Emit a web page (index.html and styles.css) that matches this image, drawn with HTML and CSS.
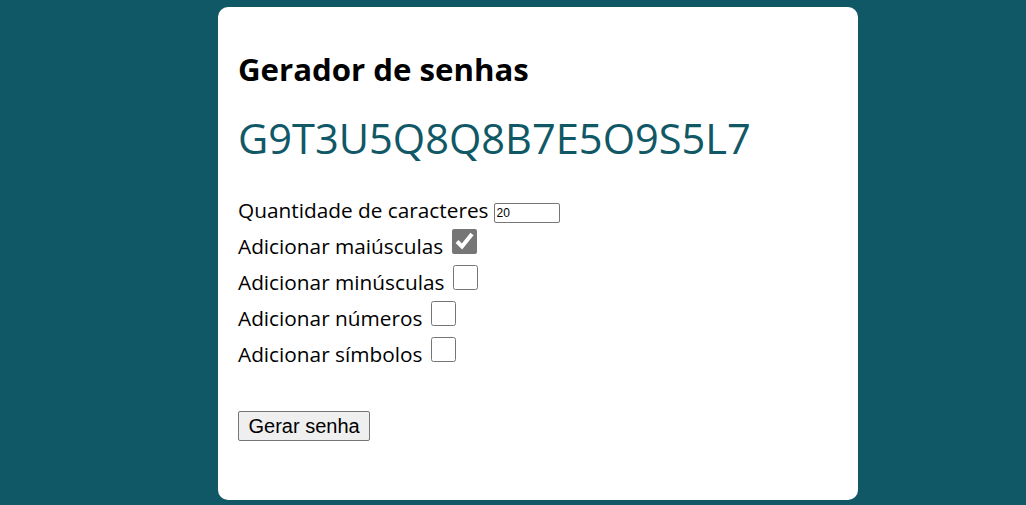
FILE: index.html
```html
<!DOCTYPE html>
<html lang="pt-BR">
<head>
<meta charset="utf-8">
<title>Gerador de senhas</title>
<link rel="stylesheet" href="styles.css">
</head>
<body>
<main class="page">
  <section class="card">
    <h1 class="title">Gerador de senhas</h1>
    <p class="password">G9T3U5Q8Q8B7E5O9S5L7</p>
    <form class="options">
      <label class="row">Quantidade de caracteres <input class="qty" type="number" value="20"></label>
      <label class="row">Adicionar maiúsculas <input class="check" type="checkbox" checked></label>
      <label class="row">Adicionar minúsculas <input class="check" type="checkbox"></label>
      <label class="row">Adicionar números <input class="check" type="checkbox"></label>
      <label class="row">Adicionar símbolos <input class="check" type="checkbox"></label>
      <div class="actions"><button class="btn" type="button">Gerar senha</button></div>
    </form>
  </section>
</main>
</body>
</html>
```
FILE: styles.css
```css
html, body {
  margin: 0;
  padding: 0;
}
body {
  background: #115866;
  font-family: "Open Sans", "Noto Sans", sans-serif;
  color: #000;
}
.page {
  display: flex;
  justify-content: center;
  padding: 7px 0 0 50px;
}
.card {
  box-sizing: border-box;
  width: 640px;
  height: 493px;
  padding: 20px;
  background: #fff;
  border-radius: 10px;
}
.title {
  margin: 22px 0 0;
  font-size: 31.2px;
  font-weight: 700;
  line-height: 40px;
}
.password {
  margin: 20px 0 0;
  font-size: 41.6px;
  line-height: 58px;
  color: #115866;
}
.options {
  margin-top: 25px;
  display: flex;
  flex-direction: column;
}
.row {
  display: flex;
  align-items: center;
  gap: 6px;
  font-size: 20.8px;
  line-height: 36px;
  height: 36px;
}
.qty {
  box-sizing: border-box;
  width: 66px;
  height: 20px;
  margin: 6px 0 0 -1px;
  padding: 1px 2px;
  border: 1px solid #767676;
  border-radius: 2px;
  font: 12px "Liberation Sans", Arial, sans-serif;
}
.check {
  width: 25px;
  height: 25px;
  margin: -10px 0 0 3px;
  accent-color: #767676;
}
.actions {
  margin-top: 39px;
}
.btn {
  box-sizing: border-box;
  height: 30px;
  padding: 0 9.5px;
  border: 1px solid #767676;
  border-radius: 2px;
  background: #efefef;
  font: 20px "Liberation Sans", Arial, sans-serif;
  color: #000;
}
```
